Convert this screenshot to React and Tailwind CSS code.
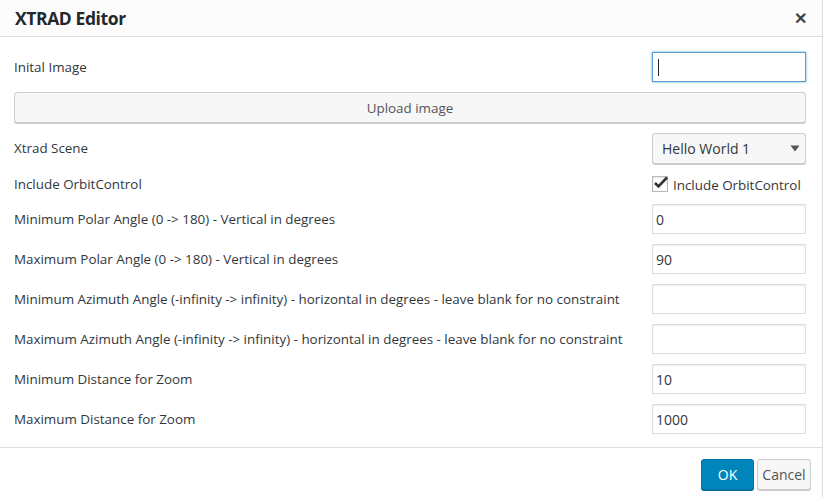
const font = { fontFamily: '"Open Sans", "Noto Sans", sans-serif' };

function TextRow({ label, value, focused }) {
  return (
    <div className="flex items-center justify-between h-[30px]">
      <label className="text-[13.4px] text-[#32373c] pt-[1px]">{label}</label>
      <div
        className={
          focused
            ? 'relative w-[154px] h-[30px] border border-[#5b9dd9] shadow-[0_0_2px_rgba(30,140,190,0.8)] bg-white'
            : 'relative w-[154px] h-[30px] border border-[#ddd] shadow-[inset_0_1px_2px_rgba(0,0,0,0.07)] bg-white'
        }
      >
        <span className="absolute left-[3px] top-[4px] text-[14px] text-[#32373c]">{value}</span>
        {focused && <span className="absolute left-[5px] top-[6px] w-px h-[17px] bg-[#222]" />}
      </div>
    </div>
  );
}

export default function App() {
  return (
    <div style={font} className="w-[823px] h-[497px] bg-white border-r border-[#ddd] flex flex-col">
      {/* Header */}
      <div className="h-[37px] shrink-0 bg-[#fcfcfc] border-b border-[#ddd] flex items-center justify-between pl-[15px] pr-[15px]">
        <h1 className="text-[17.5px] font-bold text-[#23282d] tracking-[-0.4px]">XTRAD Editor</h1>
        <span className="text-[16px] font-bold text-[#444] leading-none">✕</span>
      </div>

      {/* Body */}
      <div className="flex-1 flex flex-col gap-[10px] pt-[15px] pl-[14px] pr-[16px]">
        <TextRow label="Inital Image" value="" focused />

        <button className="h-[31px] w-full bg-[#f7f7f7] border border-[#ccc] rounded-[3px] shadow-[0_1px_0_#ccc] text-[13.4px] text-[#555] pt-[1px]">
          Upload image
        </button>

        <div className="flex items-center justify-between h-[31px]">
          <label className="text-[13.4px] text-[#32373c]">Xtrad Scene</label>
          <div className="relative w-[154px] h-[31px] bg-[#f7f7f7] border border-[#ccc] rounded-[3px] shadow-[0_1px_0_#ccc] flex items-center pl-[9px]">
            <span className="text-[14px] text-[#32373c]">Hello World 1</span>
            <svg className="absolute right-[5px] top-[11px]" width="10" height="7" viewBox="0 0 10 7">
              <path d="M0.5 0.5 H9.5 L5 6.5 Z" fill="#555" />
            </svg>
          </div>
        </div>

        <div className="flex items-center justify-between h-[20px]">
          <label className="text-[13.4px] text-[#32373c]">Include OrbitControl</label>
          <div className="w-[154px] flex items-center gap-[5px]">
            <div className="relative w-[16px] h-[16px] border border-[#b4b9be] bg-white shadow-[inset_0_1px_2px_rgba(0,0,0,0.1)]">
              <svg className="absolute -left-[1px] -top-[3px]" width="18" height="18" viewBox="0 0 18 18">
                <path d="M3 9 L6.5 12.5 L15 3.5" stroke="#333" strokeWidth="2.6" fill="none" />
              </svg>
            </div>
            <span className="text-[13.4px] text-[#32373c] pt-[2px]">Include OrbitControl</span>
          </div>
        </div>

        <TextRow label="Minimum Polar Angle (0 -> 180) - Vertical in degrees" value="0" />
        <TextRow label="Maximum Polar Angle (0 -> 180) - Vertical in degrees" value="90" />
        <TextRow label="Minimum Azimuth Angle (-infinity -> infinity) - horizontal in degrees - leave blank for no constraint" value="" />
        <TextRow label="Maximum Azimuth Angle (-infinity -> infinity) - horizontal in degrees - leave blank for no constraint" value="" />
        <TextRow label="Minimum Distance for Zoom" value="10" />
        <TextRow label="Maximum Distance for Zoom" value="1000" />
      </div>

      {/* Footer */}
      <div className="h-[50px] shrink-0 border-t border-[#ddd] flex items-center justify-end gap-[3px] pr-[11px] pt-[3px]">
        <button className="h-[31px] w-[53px] bg-[#0085ba] border border-[#0073aa] rounded-[3px] shadow-[0_1px_0_#006799] text-[14px] text-white">
          OK
        </button>
        <button className="h-[31px] w-[54px] bg-[#f7f7f7] border border-[#ccc] rounded-[3px] shadow-[0_1px_0_#ccc] text-[14px] text-[#555]">
          Cancel
        </button>
      </div>
    </div>
  );
}
